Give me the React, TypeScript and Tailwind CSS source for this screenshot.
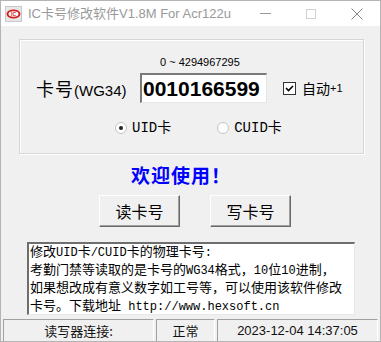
import React from 'react';

const cjk = { fontFamily: '"Noto Sans CJK SC", sans-serif' };
const sans = { fontFamily: '"Liberation Sans", "Noto Sans CJK SC", sans-serif' };
const song = { fontFamily: '"Liberation Mono", "Noto Sans CJK SC", monospace' };

function AppIcon() {
  return (
    <svg width="17" height="16" viewBox="0 0 17 16">
      <rect x="0.5" y="0.5" width="16" height="15" fill="#e8e8e8" stroke="#c8c8c8" />
      <ellipse cx="8.5" cy="8" rx="7" ry="4.5" fill="#d42020" />
      <ellipse cx="8.5" cy="8" rx="5" ry="2.8" fill="#fff" />
      <text x="8.5" y="10" textAnchor="middle" fontSize="5" fontWeight="bold" fill="#d42020" fontFamily="Liberation Sans">IC</text>
    </svg>
  );
}

function TitleBar() {
  return (
    <div className="flex h-[25px] items-center bg-white">
      <div className="ml-[4px] mt-[1px]">
        <AppIcon />
      </div>
      <span className="ml-[6px] text-[13px] leading-none text-[#999999]" style={sans}>
        IC卡号修改软件V1.8M For Acr122u
      </span>
      <div className="ml-auto flex h-full items-center">
        <div className="flex h-full w-[46px] items-center justify-center">
          <div className="h-px w-[11px] bg-[#9a9a9a]" />
        </div>
        <div className="flex h-full w-[46px] items-center justify-center">
          <div className="h-[10px] w-[10px] border border-[#d2d2d2]" />
        </div>
        <div className="flex h-full w-[46px] items-center justify-center">
          <svg width="12" height="12" viewBox="0 0 12 12">
            <path d="M0.5 0.5 L11.5 11.5 M11.5 0.5 L0.5 11.5" stroke="#8a8a8a" strokeWidth="1" />
          </svg>
        </div>
      </div>
    </div>
  );
}

function Radio({ checked, label, className }: { checked?: boolean; label: string; className?: string }) {
  return (
    <div className={'flex items-center ' + (className ?? '')}>
      <div className="flex h-[12px] w-[12px] items-center justify-center rounded-full border border-[#c4c4c4] bg-white">
        {checked && <div className="h-[4px] w-[4px] rounded-full bg-[#222]" />}
      </div>
      <span className="ml-[5px] text-[14px] leading-none text-black" style={song}>
        {label}
      </span>
    </div>
  );
}

function CardGroup() {
  return (
    <div className="ml-[18px] mt-[13px] h-[115px] w-[345px] border border-[#d5d5d5] shadow-[inset_1px_1px_0_#fff,1px_1px_0_#fff]">
      <div className="ml-[140px] mt-[16px] text-[11px] leading-[12px] text-black" style={sans}>
        0 ~ 4294967295
      </div>
      <div className="mt-[5px] flex items-center">
        <div className="ml-[16px] flex w-[104px] items-baseline text-black">
          <span className="text-[18px] leading-none tracking-[1px]" style={cjk}>卡号</span>
          <span className="text-[15px] leading-none" style={sans}>(WG34)</span>
        </div>
        <div className="flex h-[30px] w-[127px] items-center border-t-2 border-l-2 border-r border-b border-t-[#7a7a7a] border-l-[#7a7a7a] border-r-[#e6e6e6] border-b-[#e6e6e6] bg-white pl-[1px]">
          <span className="text-[21px] font-bold leading-none text-black" style={sans}>
            0010166599
          </span>
        </div>
        <div className="ml-[16px] flex items-center">
          <div className="flex h-[13px] w-[13px] items-center justify-center border border-[#333] bg-white">
            <svg width="9" height="9" viewBox="0 0 9 9">
              <path d="M1 4 L3.5 6.5 L8 2" stroke="#000" strokeWidth="1.6" fill="none" />
            </svg>
          </div>
          <span className="ml-[6px] text-[14px] leading-none text-black" style={cjk}>自动</span>
          <span className="text-[11px] leading-none text-black" style={sans}>+1</span>
        </div>
      </div>
      <div className="mt-[18px] flex items-center">
        <Radio checked label="UID卡" className="ml-[95px]" />
        <Radio label="CUID卡" className="ml-[46px]" />
      </div>
    </div>
  );
}

function Button({ label, className }: { label: string; className?: string }) {
  return (
    <div
      className={
        'flex h-[32px] w-[81px] items-center justify-center border border-t-white border-l-white border-r-[#6a6a6a] border-b-[#6a6a6a] bg-[#f0f0f0] shadow-[inset_-1px_-1px_0_#a0a0a0] ' +
        (className ?? '')
      }
    >
      <span className="text-[16px] leading-none text-black" style={cjk}>{label}</span>
    </div>
  );
}

// half-width runs are narrower in the original font, so set them a bit smaller
function NoteLine({ text }: { text: string }) {
  const parts = text.split(/([\x20-\x7e]+)/).filter(Boolean);
  return (
    <div className="h-[18px] whitespace-nowrap text-[13px] leading-[18px] text-black" style={song}>
      {parts.map((p, i) =>
        /^[\x20-\x7e]+$/.test(p) ? (
          <span key={i} className="text-[12px]">{p}</span>
        ) : (
          <span key={i}>{p}</span>
        )
      )}
    </div>
  );
}

function Notes() {
  const lines = [
    '修改UID卡/CUID卡的物理卡号:',
    '考勤门禁等读取的是卡号的WG34格式，10位10进制，',
    '如果想改成有意义数字如工号等，可以使用该软件修改',
    '卡号。下载地址 http://www.hexsoft.cn',
  ];
  return (
    <div className="ml-[26px] mt-[15px] h-[73px] w-[328px] border-t-2 border-l-2 border-r border-b border-t-[#6e6e6e] border-l-[#6e6e6e] border-r-[#e8e8e8] border-b-[#e8e8e8] bg-white pl-[1px]">
      {lines.map((l) => (
        <NoteLine key={l} text={l} />
      ))}
    </div>
  );
}

function StatusBar() {
  const cell = 'flex h-[23px] items-center justify-center border border-t-[#a0a0a0] border-l-[#a0a0a0] border-r-white border-b-white text-[13px] leading-none text-[#111]';
  return (
    <div className="mt-[4px] flex gap-[2px] px-[2px]">
      <div className={cell + ' w-[151px]'} style={cjk}>读写器连接:</div>
      <div className={cell + ' w-[59px]'} style={cjk}>正常</div>
      <div className={cell + ' flex-1'} style={sans}>2023-12-04 14:37:05</div>
    </div>
  );
}

export default function App() {
  return (
    <div className="h-[342px] w-[381px] overflow-hidden border border-[#b4b4b4] bg-[#f0f0f0]">
      <TitleBar />
      <CardGroup />
      <div className="ml-[130px] mt-[10px] text-[19px] font-bold leading-[22px] tracking-[1px] text-[#0000ff]" style={cjk}>
        欢迎使用！
      </div>
      <div className="mt-[9px] flex">
        <Button label="读卡号" className="ml-[98px]" />
        <Button label="写卡号" className="ml-[30px]" />
      </div>
      <Notes />
      <StatusBar />
    </div>
  );
}
